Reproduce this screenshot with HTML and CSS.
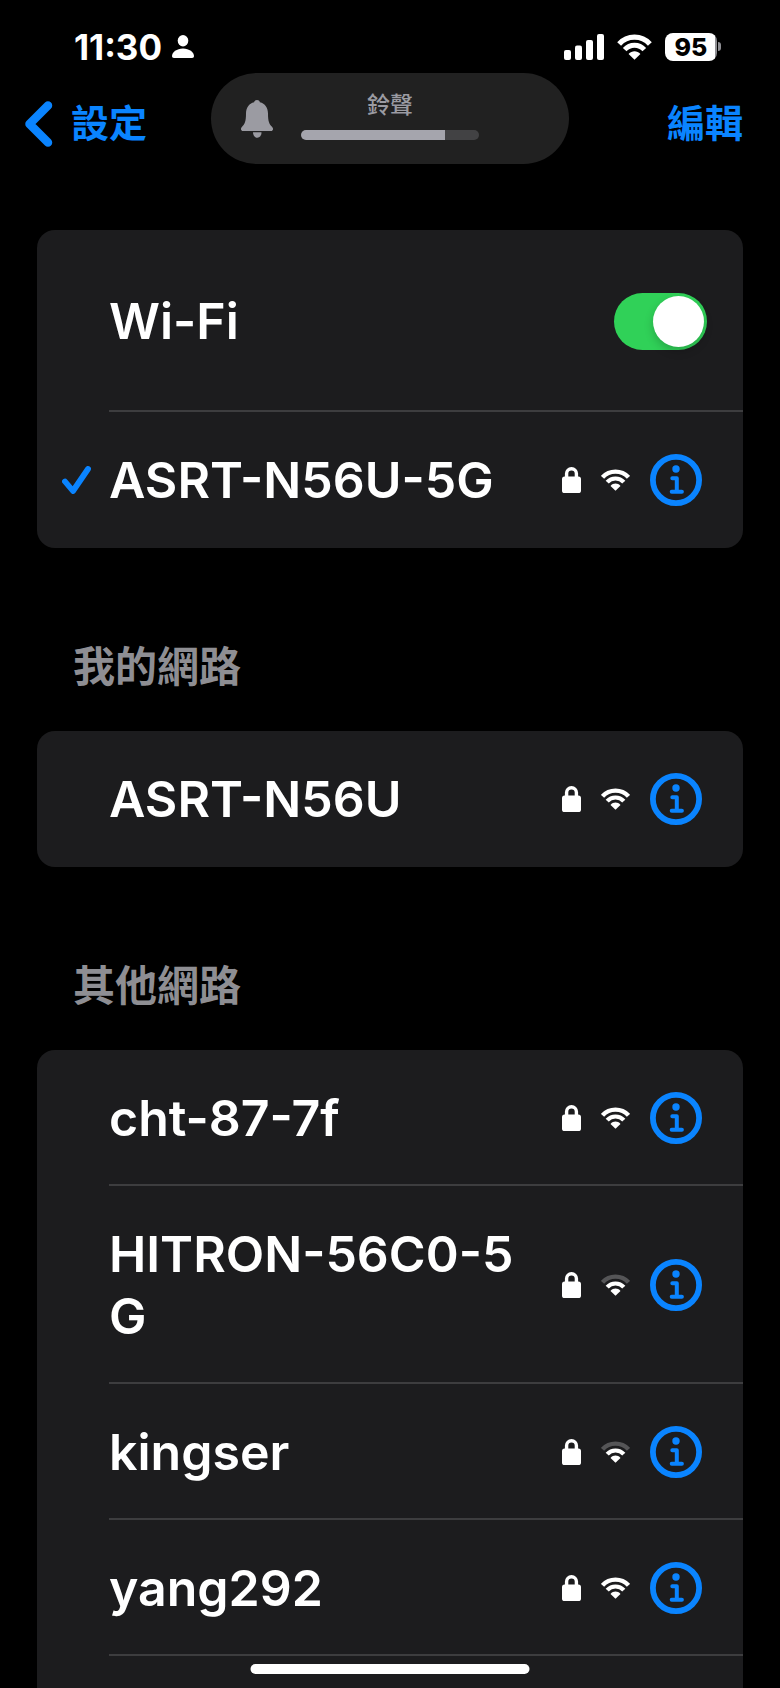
FILE: index.html
```html
<!DOCTYPE html>
<html lang="zh-Hant">
	<head>
		<meta charset="UTF-8">
		<meta name="viewport" content="width=device-width, initial-scale=1">
		<title>Wi-Fi</title>
		<link rel="stylesheet" href="styles.css">
	</head>
	<body>
		<!-- shared icons -->
		<svg class="sprite" aria-hidden="true">
			<symbol id="lock" viewBox="0 0 19 26">
				<rect x="0" y="9.500" width="19" height="16.500" rx="2.600" fill="currentColor"/>
				<path d="M4.600 12V6.600a4.900 4.900 0 0 1 9.800 0V12" fill="none" stroke="currentColor" stroke-width="3.400"/>
			</symbol>
			<symbol id="wifi" viewBox="0 0 29 22">
				<path d="M1.500 8.400a17.500 17.500 0 0 1 26 0" fill="none" stroke="currentColor" stroke-width="4.400"/>
				<path d="M6.200 13.200a11.200 11.200 0 0 1 16.600 0" fill="none" stroke="currentColor" stroke-width="4.200"/>
				<path d="M14.500 21.800l-5-4.800c2.800-3.200 7.200-3.200 10 0z" fill="currentColor"/>
			</symbol>
			<symbol id="wifi-weak" viewBox="0 0 29 22">
				<path d="M1.500 8.400a17.500 17.500 0 0 1 26 0" fill="none" stroke="#555557" stroke-width="4.400"/>
				<path d="M6.200 13.200a11.200 11.200 0 0 1 16.600 0" fill="none" stroke="currentColor" stroke-width="4.200"/>
				<path d="M14.500 21.800l-5-4.800c2.800-3.200 7.200-3.200 10 0z" fill="currentColor"/>
			</symbol>
			<symbol id="info" viewBox="0 0 52 52">
				<circle cx="26" cy="26" r="23.100" fill="none" stroke="currentColor" stroke-width="5.800"/>
				<circle cx="26" cy="15" r="3.700" fill="currentColor"/>
				<path d="M22.300 24.200h4.500v13.500M21.700 37.700h10.200" fill="none" stroke="currentColor" stroke-width="4" stroke-linecap="round" stroke-linejoin="round"/>
			</symbol>
		</svg>

		<div class="page">
			<div class="status">
				<div class="status-left">
					<span class="time">11:30</span>
					<svg class="person" viewBox="0 0 22 23">
						<ellipse cx="11" cy="5.700" rx="5.300" ry="5.700" fill="#fff"/>
						<path d="M2 23c-1.300 0-2-.7-2-2 0-3.900 4.700-7.600 11-7.600s11 3.700 11 7.600c0 1.300-.7 2-2 2z" fill="#fff"/>
					</svg>
				</div>
				<div class="status-right">
					<svg class="signal" viewBox="0 0 40 26">
						<rect x="0" y="16" width="7" height="10" rx="2" fill="#fff"/>
						<rect x="11" y="11.500" width="7" height="14.500" rx="2" fill="#fff"/>
						<rect x="22" y="6" width="7" height="20" rx="2" fill="#fff"/>
						<rect x="33" y="0" width="7" height="26" rx="2" fill="#fff"/>
					</svg>
					<svg class="status-wifi"><use href="#wifi"/></svg>
					<div class="battery"><span class="battery-level">95</span></div>
				</div>
			</div>

			<nav class="nav">
				<a class="nav-link" href="#">
					<svg class="back" viewBox="0 0 28 46"><path d="M23 4.500L4.500 23 23 41.500" fill="none" stroke="currentColor" stroke-width="8.500" stroke-linecap="round" stroke-linejoin="round"/></svg>
					設定
				</a>
				<button class="nav-link" type="button">編輯</button>
			</nav>

			<main class="content">
				<ul class="card">
					<li class="row row-switch">
						<label class="name" for="wifi-on">Wi-Fi</label>
						<input class="switch" type="checkbox" role="switch" id="wifi-on" checked>
					</li>
					<li class="row">
						<svg class="check" viewBox="0 0 29 28"><path d="M3 15.500l8 9.500L26 3" fill="none" stroke="currentColor" stroke-width="5.800" stroke-linecap="round" stroke-linejoin="round"/></svg>
						<span class="name">ASRT-N56U-5G</span>
						<span class="icons">
							<svg class="lock"><use href="#lock"/></svg>
							<svg class="wifi"><use href="#wifi"/></svg>
							<button class="info" type="button" aria-label="ASRT-N56U-5G"><svg><use href="#info"/></svg></button>
						</span>
					</li>
				</ul>

				<h2 class="title">我的網路</h2>
				<ul class="card">
					<li class="row">
						<span class="name">ASRT-N56U</span>
						<span class="icons">
							<svg class="lock"><use href="#lock"/></svg>
							<svg class="wifi"><use href="#wifi"/></svg>
							<button class="info" type="button" aria-label="ASRT-N56U"><svg><use href="#info"/></svg></button>
						</span>
					</li>
				</ul>

				<h2 class="title">其他網路</h2>
				<ul class="card card-more">
					<li class="row">
						<span class="name">cht-87-7f</span>
						<span class="icons">
							<svg class="lock"><use href="#lock"/></svg>
							<svg class="wifi"><use href="#wifi"/></svg>
							<button class="info" type="button" aria-label="cht-87-7f"><svg><use href="#info"/></svg></button>
						</span>
					</li>
					<li class="row">
						<span class="name">HITRON-56C0-5G</span>
						<span class="icons">
							<svg class="lock"><use href="#lock"/></svg>
							<svg class="wifi"><use href="#wifi-weak"/></svg>
							<button class="info" type="button" aria-label="HITRON-56C0-5G"><svg><use href="#info"/></svg></button>
						</span>
					</li>
					<li class="row">
						<span class="name">kingser</span>
						<span class="icons">
							<svg class="lock"><use href="#lock"/></svg>
							<svg class="wifi"><use href="#wifi-weak"/></svg>
							<button class="info" type="button" aria-label="kingser"><svg><use href="#info"/></svg></button>
						</span>
					</li>
					<li class="row">
						<span class="name">yang292</span>
						<span class="icons">
							<svg class="lock"><use href="#lock"/></svg>
							<svg class="wifi"><use href="#wifi"/></svg>
							<button class="info" type="button" aria-label="yang292"><svg><use href="#info"/></svg></button>
						</span>
					</li>
				</ul>
			</main>
		</div>

		<!-- ringer volume, floats over the nav -->
		<div class="ringer">
			<svg class="bell" viewBox="0 0 32 38">
				<path d="M16 0c1.500 0 2.600.9 2.900 2.200C24 3.500 27 7.600 27 13.500c0 8 1.200 10.500 4 13.300 1.900 2 1 4.200-1 4.200H2c-2 0-2.900-2.200-1-4.200 2.800-2.800 4-5.300 4-13.300C5 7.600 8 3.500 13.100 2.200 13.400.9 14.500 0 16 0z" fill="currentColor"/>
				<path d="M12 32.300h8.500c0 3.200-1.700 5.400-4.200 5.400S12 35.500 12 32.300z" fill="currentColor"/>
			</svg>
			<div class="ringer-body">
				<label class="ringer-label" for="volume">鈴聲</label>
				<input class="volume" type="range" id="volume" min="0" max="100" value="81">
			</div>
		</div>
		<div class="home"></div>
	</body>
</html>
```

FILE: styles.css
```css
*{
	margin: 0;
	padding: 0;
	box-sizing: border-box;
	list-style: none;
}
body{
	background: #000;
	color: #fff;
	font-family: Inter, "Noto Sans CJK TC", sans-serif;
}
svg{
	display: block;
	flex: none;
}
button{
	border: 0;
	background: none;
	font: inherit;
	cursor: pointer;
}
.sprite{
	position: absolute;
	width: 0;
	height: 0;
}
.page{
	display: flex;
	flex-direction: column;
	min-height: 100vh;
}

/* status bar */
.status{
	display: flex;
	justify-content: space-between;
	align-items: center;
	height: 93px;
	padding: 0 59px 0 74px;
}
.status-left{
	display: flex;
	align-items: center;
	gap: 10px;
}
.time{
	font-size: 35px;
	line-height: 40px;
	font-weight: 700;
}
.person{
	width: 22px;
	height: 23px;
}
.status-right{
	display: flex;
	align-items: center;
	gap: 13px;
}
.signal{
	width: 40px;
	height: 26px;
}
.status-wifi{
	width: 35px;
	height: 26px;
}
.battery{
	display: flex;
	align-items: center;
}
.battery-level{
	width: 52px;
	border-radius: 8px;
	background: linear-gradient(90deg, #fff 50px, #8e8e93 50px);
	color: #000;
	font-size: 25px;
	line-height: 28px;
	font-weight: 800;
	text-align: center;
}
.battery::after{
	content: "";
	width: 3px;
	height: 9px;
	margin-left: 1px;
	border-radius: 0 4px 4px 0;
	background: #8e8e93;
}

/* navigation */
.nav{
	display: flex;
	justify-content: space-between;
	align-items: center;
	height: 61px;
	padding: 0 37px 0 25px;
}
.nav-link{
	display: flex;
	align-items: center;
	gap: 18px;
	color: #0a84ff;
	font-size: 38px;
	line-height: 61px;
	font-weight: 600;
	text-decoration: none;
}
.back{
	width: 28px;
	height: 46px;
}
.ringer{
	position: absolute;
	top: 73px;
	left: 50%;
	transform: translateX(-50%);
	display: flex;
	align-items: center;
	gap: 28px;
	width: 358px;
	height: 91px;
	padding: 0 90px 0 30px;
	border-radius: 46px;
	background: #212121;
	color: #9b9ba2;
}
.bell{
	width: 32px;
	height: 38px;
}
.ringer-body{
	display: flex;
	flex: 1;
	flex-direction: column;
	gap: 8px;
	padding-bottom: 10px;
}
.ringer-label{
	font-size: 23px;
	line-height: 34px;
	font-weight: 500;
	text-align: center;
}
.volume{
	appearance: none;
	width: 100%;
	height: 10px;
	border-radius: 5px;
	background: linear-gradient(90deg, #a5a5ad 81%, #424244 81%);
}
.volume::-webkit-slider-thumb{
	appearance: none;
	width: 0;
	height: 0;
}

/* network lists */
.content{
	display: flex;
	flex: 1;
	flex-direction: column;
	padding: 76px 37px 0;
}
.card{
	border-radius: 18px;
	background: #1c1c1e;
}
.card-more{
	flex: 1;
	border-radius: 18px 18px 0 0;
}
.row{
	display: grid;
	grid-template-columns: 72px 1fr auto;
	align-items: center;
	padding: 37px 41px 37px 0;
	background: linear-gradient(#3d3d3f, #3d3d3f) 72px 100% / 100% 2px no-repeat;
}
.card:not(.card-more) .row:last-child{
	background: none;
}
.row-switch{
	padding: 60px 36px 60px 0;
}
.name{
	grid-column: 2;
	font-size: 50px;
	line-height: 62px;
	font-weight: 600;
	word-break: break-all;
}
.check{
	width: 29px;
	height: 28px;
	margin-left: 25px;
	color: #0a84ff;
}
.icons{
	display: flex;
	align-items: center;
	gap: 20px;
	padding-left: 40px;
}
.lock{
	width: 19px;
	height: 26px;
}
.wifi{
	width: 29px;
	height: 22px;
}
.info{
	color: #0a84ff;
}
.info svg{
	width: 52px;
	height: 52px;
}
.title{
	padding: 88px 36px 33px;
	color: #8e8e93;
	font-size: 42px;
	line-height: 62px;
	font-weight: 600;
}
.switch{
	appearance: none;
	width: 93px;
	height: 57px;
	padding: 3px;
	border-radius: 29px;
	background: #39393d;
	cursor: pointer;
}
.switch::before{
	content: "";
	display: block;
	width: 51px;
	height: 51px;
	border-radius: 50%;
	background: #fff;
	box-shadow: 0 4px 10px rgba(0,0,0,0.2);
}
.switch:checked{
	background: #30d158;
}
.switch:checked::before{
	margin-left: auto;
}
.home{
	position: fixed;
	bottom: 14px;
	left: 50%;
	width: 279px;
	height: 10px;
	border-radius: 5px;
	background: #fff;
	transform: translateX(-50%);
}
```
